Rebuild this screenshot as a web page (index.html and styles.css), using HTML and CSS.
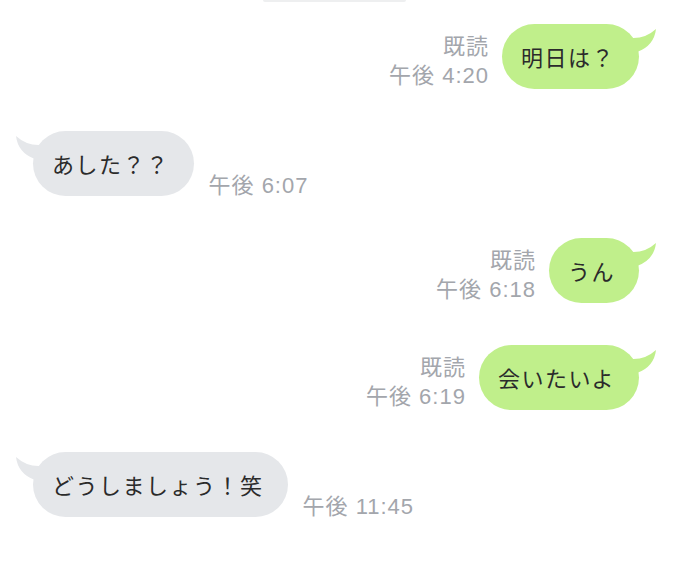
FILE: index.html
```html
<!DOCTYPE html>
<html lang="ja">
<head>
<meta charset="utf-8">
<link rel="stylesheet" href="styles.css">
</head>
<body>
<div class="date-pill"></div>
<div class="chat">
  <div class="row me">
    <div class="meta"><span>既読</span><span>午後 4:20</span></div>
    <div class="bubble green">明日は？<svg class="tail" viewBox="0 0 30 30"><path d="M2,14 Q16,15 27,5 Q25,22 8,28 L2,28 Z"/></svg></div>
  </div>
  <div class="row you">
    <div class="bubble gray">あした？？<svg class="tail" viewBox="0 0 30 30"><path d="M2,14 Q16,15 27,5 Q25,22 8,28 L2,28 Z"/></svg></div>
    <div class="meta"><span>午後 6:07</span></div>
  </div>
  <div class="row me">
    <div class="meta"><span>既読</span><span>午後 6:18</span></div>
    <div class="bubble green">うん<svg class="tail" viewBox="0 0 30 30"><path d="M2,14 Q16,15 27,5 Q25,22 8,28 L2,28 Z"/></svg></div>
  </div>
  <div class="row me">
    <div class="meta"><span>既読</span><span>午後 6:19</span></div>
    <div class="bubble green">会いたいよ<svg class="tail" viewBox="0 0 30 30"><path d="M2,14 Q16,15 27,5 Q25,22 8,28 L2,28 Z"/></svg></div>
  </div>
  <div class="row you">
    <div class="bubble gray">どうしましょう！笑<svg class="tail" viewBox="0 0 30 30"><path d="M2,14 Q16,15 27,5 Q25,22 8,28 L2,28 Z"/></svg></div>
    <div class="meta"><span>午後 11:45</span></div>
  </div>
</div>
</body>
</html>
```
FILE: styles.css
```css
html, body {
  margin: 0;
  padding: 0;
  background: #ffffff;
}
body {
  width: 674px;
  height: 564px;
  overflow: hidden;
  font-family: "Liberation Sans", "Noto Sans CJK JP", sans-serif;
}
.date-pill {
  width: 143px;
  height: 2px;
  margin-left: 263px;
  background: #eeeff0;
  border-radius: 0 0 8px 8px;
}
.chat {
  display: flex;
  flex-direction: column;
  gap: 42px;
  padding: 22px 35px 0 33px;
}
.row {
  display: flex;
  align-items: flex-end;
}
.row.me {
  justify-content: flex-end;
  gap: 13px;
}
.row.you {
  justify-content: flex-start;
  gap: 15px;
}
.bubble {
  position: relative;
  height: 65px;
  line-height: 65px;
  padding: 0 24px 0 19px;
  border-radius: 33px;
  font-family: "Noto Sans CJK JP", sans-serif;
  font-size: 22px;
  letter-spacing: 1.5px;
  color: #2b2b2b;
  white-space: nowrap;
}
.bubble.green {
  background: #c0ef8b;
}
.bubble.gray {
  background: #e5e7ea;
}
.tail {
  position: absolute;
  top: 0;
  width: 30px;
  height: 30px;
}
.green .tail {
  right: -20px;
  fill: #c0ef8b;
}
.gray .tail {
  left: -20px;
  fill: #e5e7ea;
  transform: scaleX(-1);
}
.meta {
  display: flex;
  flex-direction: column;
  font-size: 22px;
  line-height: 29px;
  letter-spacing: 1px;
  color: #a3a6ac;
  white-space: nowrap;
}
.me .meta {
  align-items: flex-end;
  margin-bottom: -1px;
}
.you .meta {
  margin-bottom: -4px;
}
```
